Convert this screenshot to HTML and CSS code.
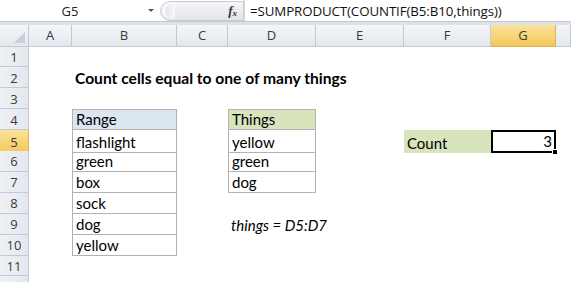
FILE: index.html
```
<!DOCTYPE html>
<html>
<head>
<meta charset="utf-8">
<link rel="stylesheet" href="styles.css">
</head>
<body>
<div class="fbar">
  <div class="namebox"><span class="nb-text">G5</span><span class="nb-arrow"></span></div>
  <div class="pill"><span class="pill-cap"></span><span class="fx">f<sub>x</sub></span></div>
  <div class="formula">=SUMPRODUCT(COUNTIF(B5:B10,things))</div>
</div>
<div class="gap"></div>
<div class="sheet">
  <div class="row hdr">
    <div class="corner"><span class="tri"></span></div>
    <div class="ch">A</div><div class="ch">B</div><div class="ch">C</div><div class="ch">D</div><div class="ch">E</div><div class="ch">F</div><div class="ch sel">G</div><div class="ch"></div>
  </div>
  <div class="row"><div class="rh">1</div><div></div><div></div><div></div><div></div><div></div><div></div><div></div><div></div></div>
  <div class="row"><div class="rh">2</div><div></div><div class="c title">Count cells equal to one of many things</div><div></div><div></div><div></div><div></div><div></div><div></div></div>
  <div class="row"><div class="rh">3</div><div></div><div></div><div></div><div></div><div></div><div></div><div></div><div></div></div>
  <div class="row"><div class="rh">4</div><div></div><div class="c bx top blue">Range</div><div></div><div class="c bx top green">Things</div><div></div><div></div><div></div><div></div></div>
  <div class="row"><div class="rh sel">5</div><div></div><div class="c bx">flashlight</div><div></div><div class="c bx">yellow</div><div></div><div class="c green">Count</div><div class="c num active">3<span class="handle"></span></div><div></div></div>
  <div class="row"><div class="rh">6</div><div></div><div class="c bx">green</div><div></div><div class="c bx">green</div><div></div><div></div><div></div><div></div></div>
  <div class="row"><div class="rh">7</div><div></div><div class="c bx">box</div><div></div><div class="c bx">dog</div><div></div><div></div><div></div><div></div></div>
  <div class="row"><div class="rh">8</div><div></div><div class="c bx">sock</div><div></div><div></div><div></div><div></div><div></div><div></div></div>
  <div class="row"><div class="rh">9</div><div></div><div class="c bx">dog</div><div></div><div class="c it">things = D5:D7</div><div></div><div></div><div></div><div></div></div>
  <div class="row"><div class="rh">10</div><div></div><div class="c bx">yellow</div><div></div><div></div><div></div><div></div><div></div><div></div></div>
  <div class="row"><div class="rh">11</div><div></div><div></div><div></div><div></div><div></div><div></div><div></div><div></div></div>
  <div class="row"><div class="rh"></div><div></div><div></div><div></div><div></div><div></div><div></div><div></div><div></div></div>
</div>
</body>
</html>
```
FILE: styles.css
```
* { box-sizing: border-box; }
html, body { margin: 0; padding: 0; background: #fff; overflow: hidden; }
body { width: 571px; height: 282px; font-family: "Lato", "Liberation Sans", sans-serif; }

.fbar {
  display: flex;
  height: 22px;
  background: #fff;
  border-bottom: 1px solid #c3c8cf;
}
.namebox {
  width: 160px;
  display: flex;
  align-items: center;
  font-family: "Open Sans", "Noto Sans", sans-serif;
  font-size: 13px;
  color: #222;
}
.nb-text { width: 140px; text-align: center; }
.nb-arrow {
  width: 0; height: 0;
  border-left: 3px solid transparent;
  border-right: 3px solid transparent;
  border-top: 3px solid #555;
  margin-left: 8px;
}
.pill {
  width: 84px;
  height: 20px;
  margin-top: 1px;
  background: linear-gradient(#f4f5f7, #e2e5e9);
  border: 1px solid #c9cdd3;
  border-radius: 10px 0 0 10px;
  display: flex;
  align-items: center;
  justify-content: space-between;
  padding: 0 6px 0 2px;
}
.pill-cap {
  width: 12px; height: 16px;
  border-radius: 8px 0 0 8px;
  border-left: 2px solid #fff;
  border-top: 1px solid #fbfbfc;
  background: linear-gradient(90deg, #e2e5e8, #f7f8f9);
}
.fx {
  font-family: "Liberation Serif", serif;
  font-style: italic;
  font-weight: bold;
  font-size: 13px;
  color: #333;
}
.fx sub { font-size: 9px; vertical-align: -1px; }
.formula {
  flex: 1;
  padding-left: 5px;
  border-left: 1px solid #d6d9de;
  display: flex;
  align-items: center;
  font-family: "Open Sans", "Noto Sans", sans-serif;
  font-size: 13.3px;
  color: #111;
  letter-spacing: -0.1px;
}
.gap { height: 3px; background: #dde2e8; }

.sheet { display: flex; flex-direction: column; }
.row {
  display: grid;
  grid-template-columns: 29px 43px 105px 51px 88px 88px 87px 65px 1fr;
  height: 20.9px;
}
.row.hdr { height: 21.6px; }
.corner, .ch, .rh {
  background: linear-gradient(#f3f5f8, #e4e8ee);
  border-right: 1px solid #c4cad3;
  border-bottom: 1px solid #c4cad3;
  font-family: "Open Sans", "Noto Sans", sans-serif;
  font-size: 13px;
  color: #3a3a3a;
  display: flex;
  align-items: center;
  justify-content: center;
}
.corner { position: relative; }
.tri {
  position: absolute;
  right: 3px; bottom: 3px;
  width: 0; height: 0;
  border-left: 11px solid transparent;
  border-bottom: 11px solid #c9ced6;
}
.ch.sel, .rh.sel {
  background: linear-gradient(#fbe39a, #f4c75d);
  border-right-color: #e0b24d;
  border-bottom-color: #e0b24d;
}
.rh { background: linear-gradient(90deg, #eef1f5, #e4e8ee); padding-top: 1px; }

.c {
  font-size: 15px;
  color: #000;
  display: flex;
  align-items: flex-end;
  padding: 0 3px 1px 3px;
  white-space: nowrap;
  position: relative;
}
.title { font-weight: bold; font-size: 15.6px; }
.bx {
  border-left: 1px solid #b3b3b3;
  border-right: 1px solid #b3b3b3;
  border-bottom: 1px solid #b3b3b3;
}
.bx.top { border-top: 1px solid #b3b3b3; }
.blue { background: #dce6f1; }
.green { background: #d8e4bc; }
.it { font-style: italic; }
.num { justify-content: flex-end; }
.active {
  border: 2px solid #000;
  padding-right: 2px;
}
.handle {
  position: absolute;
  right: -4px; bottom: -4px;
  width: 6px; height: 6px;
  background: #000;
  border: 1px solid #fff;
}
```
